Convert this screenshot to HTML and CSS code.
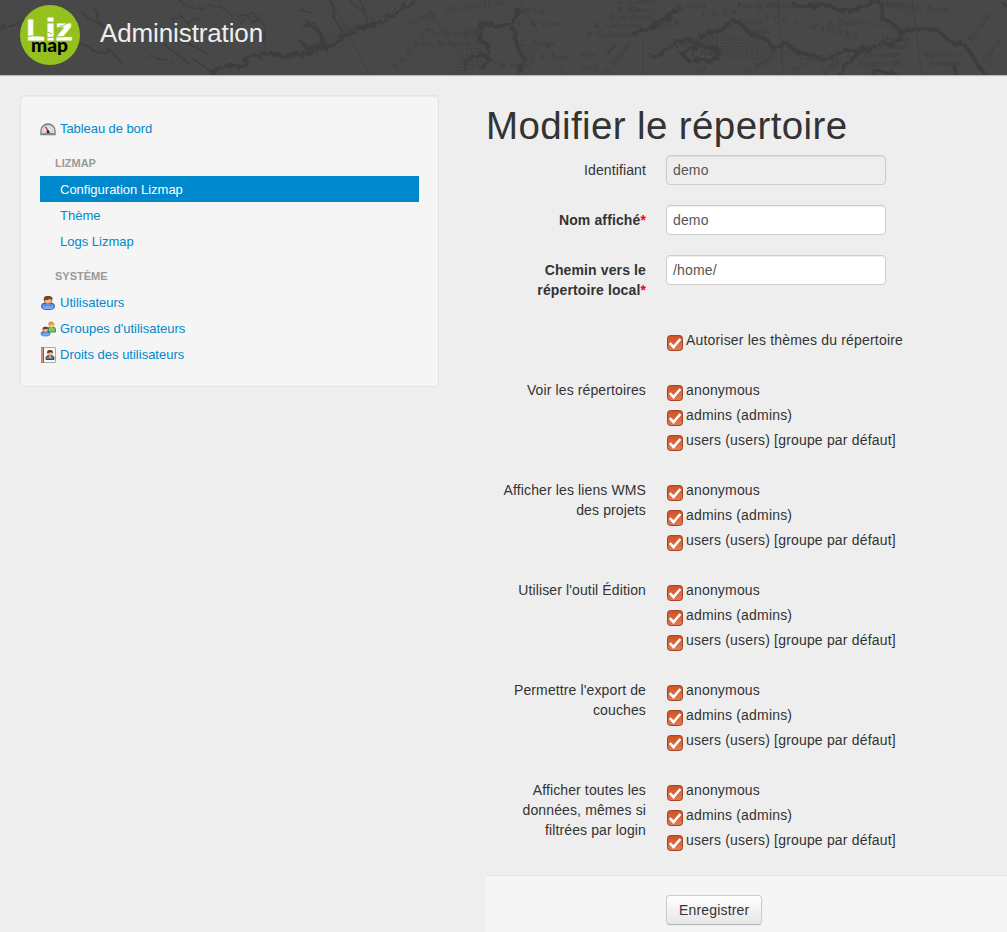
FILE: index.html
```html
<!DOCTYPE html>
<html lang="fr">
<head>
<meta charset="utf-8">
<title>Administration</title>
<link rel="stylesheet" href="styles.css">
</head>
<body>
<svg class="defs" width="0" height="0">
  <defs>
    <linearGradient id="orange" x1="0" y1="0" x2="0" y2="1"><stop offset="0" stop-color="#cf5123"/><stop offset="1" stop-color="#df7b58"/></linearGradient>
    <linearGradient id="blue" x1="0" y1="0" x2="0" y2="1"><stop offset="0" stop-color="#3c79df"/><stop offset="1" stop-color="#93c4fb"/></linearGradient>
    <symbol id="check" viewBox="0 0 16 16">
      <rect x=".5" y=".5" width="15" height="15" rx="3" fill="url(#orange)" stroke="#a24423"/>
      <path d="M2.800 8.200l3.700 3.900L13.400 4" fill="none" stroke="#fff" stroke-width="2.600"/>
    </symbol>
    <symbol id="person" viewBox="0 0 16 16">
      <path d="M1.500 11.500Q1.500 8 5 8h6q3.500 0 3.500 3.500Q14.500 14.500 8 14.500T1.500 11.500z" fill="url(#blue)" stroke="#2858b0"/>
      <path d="M5.500 8l2.500 2 2.500-2z" fill="#edbd8a"/>
      <ellipse cx="8" cy="5.500" rx="3.600" ry="3.500" fill="#f1bd88" stroke="#825025" stroke-width=".7"/>
      <path d="M3.800 5.500Q3 1 7 1h3q3.500 1 2.200 4.500L10.500 4Q7 5 3.800 5.500z" fill="#7b4220"/>
    </symbol>
  </defs>
</svg>

<header class="header">
  <svg class="map" width="1007" height="75" viewBox="0 0 1007 75" aria-hidden="true">
    <defs>
      <filter id="rough" x="-5%" y="-20%" width="110%" height="140%"><feTurbulence type="fractalNoise" baseFrequency=".16" numOctaves="3" seed="4"/><feDisplacementMap in="SourceGraphic" scale="8"/></filter>
      <pattern id="hatch" width="5" height="3" patternUnits="userSpaceOnUse"><path d="M0 1h4" stroke="#3e3e3e" stroke-width=".8"/></pattern>
    </defs>
    <g filter="url(#rough)" fill="none" stroke="#3e3e3e">
      <g stroke-width="1.500">
        <path d="M180 1q12 11 26 6t25 8l22-1 12 12-1 24-4 11M331 0l3 18 8 12 4 8M240 24l6-10 8 10 8-12M170 20l10-5 8 9 13-6"/>
        <path d="M0 28l30-7 8 4M82 14l30 17M95 8l6 18M73 48q8-9 17 0t20 1l13 16M145 55l28 7M165 45l26 20M180 40l28 13M194 60l22 14"/>
        <path d="M300 10l16 4M304 20l12 4M350 2l14 9M361 1l6 20"/>
      </g>
      <g stroke-width="4">
        <path d="M211 75q10-12 22-9t16-9l20-4 14 4 19-3 16-3 16-7 10-9 15-6 24-8 15-10 18-10"/>
        <path d="M302 26q12-2 19 8l3 11-17 3-6-6M476 27l12-3 12 2 13-3 5-14M482 27l-2 14 8 4-1 14M513 27l4 20 8 12-8 15M464 70l5-11 13-5 9 7-11 7"/>
        <path d="M650 28l17-10 13-12M650 55q12 5 15-6l18-9 15 1 9-8 14-2 11-10 7 1 12 13 17 5 5 9 14-5 10 8 18 4 10 4 17-9 25-1 15-8 10 4 12-14"/>
        <path d="M792 2q7 7 21 4t24 3 30-4 14 14q13 2 18 12l19-1q18-4 26 6t20 8l10 14q8 15 17 21"/>
        <path d="M682 54l16-9 20 5-4 10-25 1zM838 75l15-16 12-12M870 75l11-4 16 4M953 62l3 13M1001 0l6 8M632 34l18-6"/>
      </g>
    </g>
    <g fill="url(#hatch)"><path d="M302 46l59-25 20-5-30 17-35 23-16 4zM466 27l16 0v34l-11 12h-18l9-17zM518 40l20 8-8 22-12-4zM682 39l26-10 32 8 37 11v12h-45l-32-12-24-2zM742 50l60 2 44 6-29 5-27-7zM870 24l65 2-30 6-27-5zM880 2h35l-4 13-20-5z"/></g>
    <path d="M335 7l34 68M421 0l47 66M518 0l48 75M778 0l5 75M912 0l10 75M643 36v39" stroke="#414141" fill="none"/>
    <g class="map-text">
      <text transform="translate(410 26) rotate(-20)">COSTE</text><text transform="translate(444 13) rotate(-8)">DE CHASTEAU</text>
      <text transform="translate(396 70) rotate(-48)" textLength="54">FLORES</text>
      <text x="431" y="36">la Grande R.</text><text x="420" y="46">aux Baleines</text>
      <text x="515" y="14">Bell I.le</text><text x="518" y="26">C. de Gerat</text><text x="520" y="46">C. Rouge</text><text x="540" y="60">S. Jean</text><text x="500" y="68">B. ouge</text>
      <text x="618" y="4">R. Grande</text><text x="617" y="12">R. Blanco</text><text x="609" y="20">P. de Dudfil</text><text x="594" y="28">B. Colorada</text><text x="587" y="37">P. Colorada</text>
      <text x="580" y="57">vche</text><text x="580" y="70">rer I.</text><text class="large" transform="translate(605 53) rotate(32)">I</text><text transform="translate(607 74) rotate(-50)">S. Antonio</text>
      <text x="676" y="8">S. Anna</text><text x="737" y="8">Pan de Matanzas</text><text transform="translate(656 30) rotate(-14)">HOLA</text>
      <text transform="translate(702 17) rotate(-4)" textLength="35">CUBA</text><text x="740" y="24">Golfo</text><text x="745" y="33">Xagua</text>
      <text transform="translate(756 16) rotate(13)" textLength="104">CUPE et HAUANA</text><text x="828" y="25">S. Espirito</text><text x="691" y="56">I. Pinos</text>
      <text x="915" y="12">C. Feede</text><text x="881" y="7">Marti</text><text x="881" y="42">Mayere</text><text x="875" y="49">do Came</text><text x="863" y="57">Calendar</text><text x="858" y="66">Yargane M.</text>
      <text x="923" y="57">Baracoa e</text><text x="929" y="66">Sammen</text><text transform="translate(972 42) rotate(-54)">Barbara</text><text transform="translate(985 64) rotate(-54)">Chorro</text>
      <text transform="translate(700 74) rotate(-42)">La Jaga</text><text transform="translate(747 75) rotate(-32)">S. Jago</text><text transform="translate(795 73) rotate(-40)">S. Cruz</text><text transform="translate(825 75) rotate(-40)">Islas</text>
    </g>
  </svg>
  <svg class="logo" width="60" height="60" viewBox="0 0 60 60" role="img" aria-label="Lizmap">
    <circle cx="30" cy="30" r="30" fill="#95c11f"/>
    <g class="liz"><text x="6.500" y="34.500" textLength="18" lengthAdjust="spacingAndGlyphs">L</text><text x="25.500" y="34.500" textLength="10" lengthAdjust="spacingAndGlyphs">i</text><text x="35.500" y="34.500" textLength="17" lengthAdjust="spacingAndGlyphs">z</text></g>
    <path d="M8 31.500q9-2 21 1 12-1 24-1M25 26l7 3M41 22l8-5M37 25l4-5" fill="none" stroke="#95c11f" stroke-width="1"/>
    <text class="map-word" x="11" y="46.500" textLength="37" lengthAdjust="spacingAndGlyphs">map</text>
  </svg>
  <span class="title">Administration</span>
</header>

<main class="page">
  <nav class="sidebar">
    <a class="item"><svg class="icon" viewBox="0 0 16 16"><path d="M1 13.500V10a7 7 0 0114 0v3.500z" fill="#eee" stroke="#777" stroke-width="1.300"/><path d="M3 11V9.500a5 5 0 0110 0V11z" fill="#d5e5f7" stroke="#bbb" stroke-width=".7"/><path d="M1 12h14v2H1z" fill="#888"/><path d="M5.500 5.500l3.500 5H7.500z" fill="#e02020" stroke="#d02020" stroke-width=".7"/><path d="M6.500 11l1.500-2 2 3H7z" fill="#222"/></svg><span class="wide-label">Tableau de bord</span></a>
    <div class="group-title">LIZMAP</div>
    <a class="item active">Configuration Lizmap</a>
    <a class="item">Thème</a>
    <a class="item">Logs Lizmap</a>
    <div class="group-title">SYSTÈME</div>
    <a class="item"><svg class="icon" viewBox="0 0 16 16"><use href="#person" width="16" height="16"/></svg>Utilisateurs</a>
    <a class="item"><svg class="icon" viewBox="0 0 16 16"><path d="M8 10V8.500Q8 6 10 6h3q2.500 0 2.500 3v2H9z" fill="#80c860" stroke="#448a35"/><circle cx="11.500" cy="3.800" r="2.700" fill="#f2c58d"/><path d="M8.500 4.500Q7.700.5 11 .5t3.800 3.800L12.500 3z" fill="#d6a12c"/><use href="#person" y="5" width="11" height="11"/></svg>Groupes d'utilisateurs</a>
    <a class="item"><svg class="icon" viewBox="0 0 16 16"><path d="M1.500.5h14v15h-14z" fill="#f8f8f8" stroke="#aaa"/><path d="M1 .5h3v15H1z" fill="#bb4d28"/><path d="M1 2h2M1 4h2M1 6h2M1 8h2M1 10h2M1 12h2M1 14h2" stroke="#eee" stroke-width=".8"/><path d="M6 12.500v-2q0-2 4-2t4 2v2z" fill="#6f7580" stroke="#444"/><circle cx="10" cy="6.300" r="2.400" fill="#eab987"/><path d="M7.200 6.500Q6.300 3 10 3t2.800 3.500L11 5z" fill="#583820"/><path d="M9.300 9h1.400L10 12z" fill="#fff"/></svg>Droits des utilisateurs</a>
  </nav>

  <section class="content">
    <h1>Modifier le répertoire</h1>
    <form>
      <div class="row"><label class="label">Identifiant</label><input class="field" value="demo" readonly></div>
      <div class="row"><label class="label required">Nom affiché<b>*</b></label><input class="field" value="demo"></div>
      <div class="row"><label class="label required">Chemin vers le répertoire local<b>*</b></label><input class="field" value="/home/"></div>
      <div class="row"><span class="label"></span><div class="choices"><label><svg class="check"><use href="#check"/></svg>Autoriser les thèmes du répertoire</label></div></div>
      <div class="row"><span class="label">Voir les répertoires</span><div class="choices">
        <label><svg class="check"><use href="#check"/></svg>anonymous</label><label><svg class="check"><use href="#check"/></svg>admins (admins)</label><label><svg class="check"><use href="#check"/></svg>users (users) [groupe par défaut]</label></div></div>
      <div class="row"><span class="label">Afficher les liens WMS des projets</span><div class="choices">
        <label><svg class="check"><use href="#check"/></svg>anonymous</label><label><svg class="check"><use href="#check"/></svg>admins (admins)</label><label><svg class="check"><use href="#check"/></svg>users (users) [groupe par défaut]</label></div></div>
      <div class="row"><span class="label">Utiliser l'outil Édition</span><div class="choices">
        <label><svg class="check"><use href="#check"/></svg>anonymous</label><label><svg class="check"><use href="#check"/></svg>admins (admins)</label><label><svg class="check"><use href="#check"/></svg>users (users) [groupe par défaut]</label></div></div>
      <div class="row"><span class="label">Permettre l'export de couches</span><div class="choices">
        <label><svg class="check"><use href="#check"/></svg>anonymous</label><label><svg class="check"><use href="#check"/></svg>admins (admins)</label><label><svg class="check"><use href="#check"/></svg>users (users) [groupe par défaut]</label></div></div>
      <div class="row"><span class="label">Afficher toutes les données, mêmes si filtrées par login</span><div class="choices">
        <label><svg class="check"><use href="#check"/></svg>anonymous</label><label><svg class="check"><use href="#check"/></svg>admins (admins)</label><label><svg class="check"><use href="#check"/></svg>users (users) [groupe par défaut]</label></div></div>
      <div class="actions"><button class="button" type="button">Enregistrer</button></div>
    </form>
  </section>
</main>
</body>
</html>
```
FILE: styles.css
```css
* { box-sizing: border-box; }
html, body { height: 100%; }
body {
  margin: 0;
  overflow: hidden;
  background: #eee;
  color: #333;
  font: 14px/20px "Liberation Sans", Arial, sans-serif;
}
.defs { position: absolute; }
.header {
  position: relative;
  display: flex;
  height: 75px;
  padding-left: 20px;
  background: #484848;
  box-shadow: 0 1px 1px #bbb;
}
.map { position: absolute; left: 0; top: 0; overflow: hidden; }
.map-text {
  fill: #3d3d3d;
  font: italic 9px "Liberation Serif", serif;
  letter-spacing: .3px;
}
.map-text .large { font-size: 20px; }
.logo { position: relative; margin-top: 5px; }
.liz { fill: #fff; stroke: #fff; stroke-width: .8px; font: bold 30px "Liberation Sans", sans-serif; }
.map-word { fill: #000; font: 900 18px Lato, sans-serif; }
.title {
  position: relative;
  margin: 18px 0 0 20px;
  color: #eee;
  font-size: 26px;
  line-height: 30px;
  letter-spacing: -.12px;
}
.page { display: grid; grid-template-columns: 419px 1fr; column-gap: 47px; padding: 20px 0 0 20px; }
.sidebar {
  height: 292px;
  padding: 19px;
  background: #f5f5f5;
  border: 1px solid #e3e3e3;
  border-radius: 4px;
  box-shadow: inset 0 1px 1px rgba(0, 0, 0, .05);
  font-size: 13px;
}
.item { display: flex; align-items: center; height: 26px; padding: 2px 0 0 20px; color: #08c; }
.item.active { background: #08c; color: #fff; }
.wide-label { letter-spacing: -.07px; }
.icon { flex: none; width: 16px; height: 16px; margin: -1px 4px 0 -20px; }
.group-title {
  height: 35px;
  padding: 12px 15px 3px;
  color: #999;
  font-size: 11px;
  font-weight: bold;
  line-height: 20px;
}
h1 {
  margin: 0 0 9px;
  padding-top: 11px;
  font-size: 38.5px;
  font-weight: normal;
  line-height: 40px;
  letter-spacing: .38px;
}
.row { display: grid; grid-template-columns: 160px 1fr; column-gap: 20px; margin-bottom: 20px; }
.label { padding: 5px 0; text-align: right; letter-spacing: .12px; }
.required { font-weight: bold; }
.required b { color: #f00; }
.field {
  width: 220px;
  height: 30px;
  padding: 4px 6px;
  background: #fff;
  border: 1px solid #ccc;
  border-radius: 4px;
  box-shadow: inset 0 1px 1px rgba(0, 0, 0, .075);
  color: #555;
  font: inherit;
  letter-spacing: .15px;
}
.field:read-only { background: #eee; }
.choices { padding-top: 5px; letter-spacing: .18px; }
.choices label { display: flex; height: 20px; margin-bottom: 5px; }
.check { width: 16px; height: 16px; margin: 4.5px 3px 0 1px; flex: none; }
.actions {
  padding: 19px 20px 20px 180px;
  background: #f5f5f5;
  border-top: 1px solid #e5e5e5;
}
.button {
  height: 30px;
  padding: 4px 12px;
  border: 1px solid #ccc;
  border-bottom-color: #b3b3b3;
  border-radius: 4px;
  background: linear-gradient(#fff, #e6e6e6);
  box-shadow: inset 0 1px 0 rgba(255, 255, 255, .2), 0 1px 2px rgba(0, 0, 0, .05);
  color: #333;
  font: inherit;
  letter-spacing: .17px;
}
```
